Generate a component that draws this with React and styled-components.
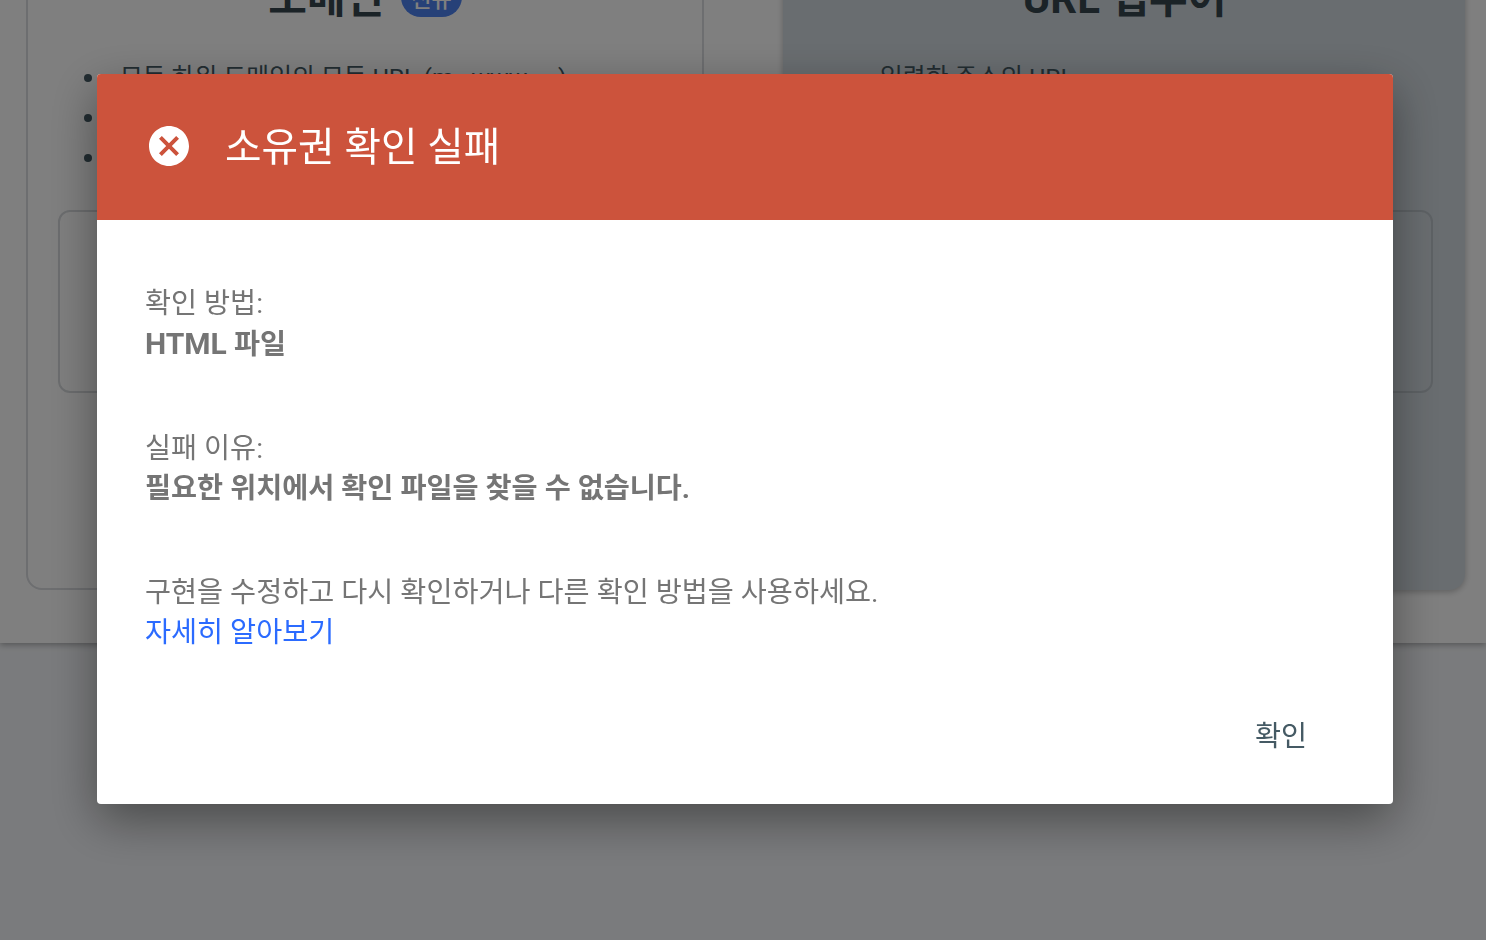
import React from "react";
import styled, { createGlobalStyle } from "styled-components";

const GlobalStyle = createGlobalStyle`
  html, body {
    margin: 0;
    padding: 0;
    height: 100%;
    overflow: hidden;
    background: #f5f7fa;
    font-family: Roboto, "Noto Sans CJK KR", sans-serif;
  }
`;

const Page = styled.div`
  height: 940px;
  overflow: hidden;
`;

const TopPanel = styled.div`
  height: 590px;
  padding: 0 21px 53px 26px;
  background: #fff;
  box-shadow: 0 2px 6px rgba(0, 0, 0, 0.3);
  display: flex;
  align-items: flex-end;
  justify-content: space-between;
  overflow: hidden;
  position: relative;
`;

const Card = styled.div`
  box-sizing: border-box;
  flex: none;
  width: ${(p) => (p.$filled ? "682px" : "678px")};
  height: 650px;
  padding: ${(p) => (p.$filled ? "32px 32px 0 33px" : "30px 30px 0")};
  border-radius: 16px;
  border: ${(p) => (p.$filled ? "none" : "2px solid #dadce0")};
  background: ${(p) => (p.$filled ? "#d3dbe1" : "#fff")};
  box-shadow: ${(p) => (p.$filled ? "0 2px 6px rgba(0, 0, 0, 0.25)" : "none")};
`;

const Heading = styled.div`
  height: 44px;
  display: flex;
  align-items: center;
  justify-content: center;
  gap: 17px;
  font-size: 42px;
  font-weight: 700;
  color: #37474f;
`;

const Badge = styled.span`
  margin-top: 6px;
  padding: 4px 10px;
  border-radius: 24px;
  background: #4d82f0;
  color: #fff;
  font-size: 22px;
  font-weight: 500;
`;

const Features = styled.ul`
  margin: 42px 0 32px;
  padding: 0 0 0 ${(p) => (p.$filled ? "28px" : "26px")};
  list-style: none;
  font-size: 24.8px;
  line-height: 40px;
  color: #455a64;
`;

const Feature = styled.li`
  display: flex;
  align-items: center;
  gap: 28px;
  white-space: nowrap;
  &::before {
    content: "";
    flex: none;
    width: 8px;
    height: 8px;
    border-radius: 50%;
    background: #455a64;
  }
`;

const InnerBox = styled.div`
  box-sizing: border-box;
  height: 183px;
  border: 2px solid ${(p) => (p.$filled ? "#bcc4ca" : "#d8dbde")};
  border-radius: 12px;
`;

const Scrim = styled.div`
  position: fixed;
  inset: 0;
  padding-left: 4px;
  background: rgba(0, 0, 0, 0.5);
  display: flex;
  align-items: flex-start;
  justify-content: center;
`;

const Dialog = styled.div`
  width: 1296px;
  height: 730px;
  margin-top: 74px;
  border-radius: 4px;
  overflow: hidden;
  background: #fff;
  box-shadow: 0 16px 48px rgba(0, 0, 0, 0.4);
  display: flex;
  flex-direction: column;
`;

const DialogHeader = styled.div`
  flex: none;
  box-sizing: border-box;
  height: 146px;
  padding: 0 0 2px 48px;
  display: flex;
  align-items: center;
  gap: 32px;
  background: #cc533c;
  color: #fff;
`;

const DialogTitle = styled.span`
  padding-bottom: 6px;
  font-size: 39.7px;
  font-weight: 400;
`;

const DialogBody = styled.div`
  flex: none;
  padding: 64px 48px 0;
  display: flex;
  flex-direction: column;
  gap: 64px;
  font-size: 28.3px;
  line-height: 40px;
  color: #757575;
`;

const Section = styled.p`
  margin: 0;
`;

const Strong = styled.strong`
  display: block;
  font-weight: 700;
`;

const StrongLatin = styled.span`
  font-size: 30px;
`;

const LearnMore = styled.a`
  display: block;
  color: #2b6bff;
  text-decoration: none;
`;

const DialogActions = styled.div`
  flex: 1;
  padding: 0 86px 47px 0;
  display: flex;
  justify-content: flex-end;
  align-items: flex-end;
`;

const ConfirmButton = styled.button`
  border: none;
  padding: 0;
  background: none;
  font: inherit;
  font-size: 28.3px;
  line-height: 40px;
  color: #455a64;
`;

function ErrorIcon() {
  return (
    <svg width="48" height="48" viewBox="0 0 24 24" fill="#fff">
      <path d="M12 2C6.47 2 2 6.47 2 12s4.47 10 10 10 10-4.47 10-10S17.53 2 12 2zm5 13.59L15.59 17 12 13.41 8.41 17 7 15.59 10.59 12 7 8.41 8.41 7 12 10.59 15.59 7 17 8.41 13.41 12 17 15.59z" />
    </svg>
  );
}

export default function App() {
  return (
    <Page>
      <GlobalStyle />
      <TopPanel>
        <Card>
          <Heading>
            도메인 <Badge>신규</Badge>
          </Heading>
          <Features>
            <Feature>모든 하위 도메인의 모든 URL (m., www. ...)</Feature>
            <Feature>https 또는 http의 모든 URL</Feature>
            <Feature>DNS 레코드로 확인 필요</Feature>
          </Features>
          <InnerBox />
        </Card>
        <Card $filled>
          <Heading>URL 접두어</Heading>
          <Features $filled>
            <Feature>입력한 주소의 URL</Feature>
            <Feature>지정된 프로토콜의 URL</Feature>
            <Feature>여러 확인 방법 지원</Feature>
          </Features>
          <InnerBox $filled />
        </Card>
      </TopPanel>
      <Scrim>
        <Dialog>
          <DialogHeader>
            <ErrorIcon />
            <DialogTitle>소유권 확인 실패</DialogTitle>
          </DialogHeader>
          <DialogBody>
            <Section>
              확인 방법:
              <Strong>
                <StrongLatin>HTML</StrongLatin> 파일
              </Strong>
            </Section>
            <Section>
              실패 이유:
              <Strong>필요한 위치에서 확인 파일을 찾을 수 없습니다.</Strong>
            </Section>
            <Section>
              구현을 수정하고 다시 확인하거나 다른 확인 방법을 사용하세요.
              <LearnMore href="#">자세히 알아보기</LearnMore>
            </Section>
          </DialogBody>
          <DialogActions>
            <ConfirmButton>확인</ConfirmButton>
          </DialogActions>
        </Dialog>
      </Scrim>
    </Page>
  );
}
